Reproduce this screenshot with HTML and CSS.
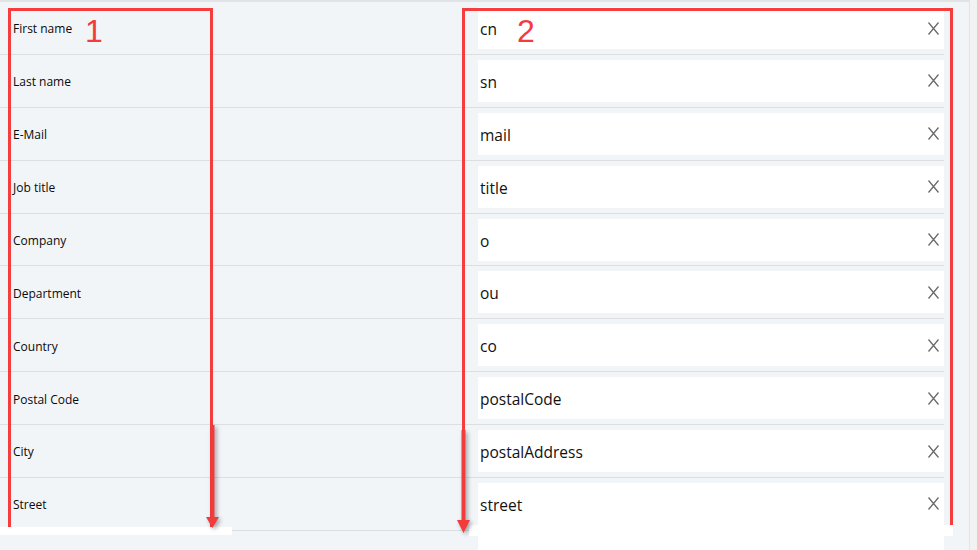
FILE: index.html
```html
<!DOCTYPE html>
<html>
<head>
  <title>User attributes</title>
  <link rel="stylesheet" href="styles.css">
</head>
<body>
  <div class="page">
    <div class="main">
      <div class="form">
        <div class="row">
          <label class="label">First name</label>
          <div class="field"><span class="value">cn</span><svg class="clear" viewBox="0 0 11 13"><path d="M0.5 0.5L10.5 12.5M10.5 0.5L0.5 12.5"/></svg></div>
        </div>
        <div class="row">
          <label class="label">Last name</label>
          <div class="field"><span class="value">sn</span><svg class="clear" viewBox="0 0 11 13"><path d="M0.5 0.5L10.5 12.5M10.5 0.5L0.5 12.5"/></svg></div>
        </div>
        <div class="row">
          <label class="label">E-Mail</label>
          <div class="field"><span class="value">mail</span><svg class="clear" viewBox="0 0 11 13"><path d="M0.5 0.5L10.5 12.5M10.5 0.5L0.5 12.5"/></svg></div>
        </div>
        <div class="row">
          <label class="label">Job title</label>
          <div class="field"><span class="value">title</span><svg class="clear" viewBox="0 0 11 13"><path d="M0.5 0.5L10.5 12.5M10.5 0.5L0.5 12.5"/></svg></div>
        </div>
        <div class="row">
          <label class="label">Company</label>
          <div class="field"><span class="value">o</span><svg class="clear" viewBox="0 0 11 13"><path d="M0.5 0.5L10.5 12.5M10.5 0.5L0.5 12.5"/></svg></div>
        </div>
        <div class="row">
          <label class="label">Department</label>
          <div class="field"><span class="value">ou</span><svg class="clear" viewBox="0 0 11 13"><path d="M0.5 0.5L10.5 12.5M10.5 0.5L0.5 12.5"/></svg></div>
        </div>
        <div class="row">
          <label class="label">Country</label>
          <div class="field"><span class="value">co</span><svg class="clear" viewBox="0 0 11 13"><path d="M0.5 0.5L10.5 12.5M10.5 0.5L0.5 12.5"/></svg></div>
        </div>
        <div class="row">
          <label class="label">Postal Code</label>
          <div class="field"><span class="value">postalCode</span><svg class="clear" viewBox="0 0 11 13"><path d="M0.5 0.5L10.5 12.5M10.5 0.5L0.5 12.5"/></svg></div>
        </div>
        <div class="row">
          <label class="label">City</label>
          <div class="field"><span class="value">postalAddress</span><svg class="clear" viewBox="0 0 11 13"><path d="M0.5 0.5L10.5 12.5M10.5 0.5L0.5 12.5"/></svg></div>
        </div>
        <div class="row">
          <label class="label">Street</label>
          <div class="field"><span class="value">street</span><svg class="clear" viewBox="0 0 11 13"><path d="M0.5 0.5L10.5 12.5M10.5 0.5L0.5 12.5"/></svg></div>
        </div>
        <div class="row">
          <label class="label"></label>
          <div class="field"></div>
        </div>
      </div>
    </div>
    <div class="side"></div>
  </div>

  <!-- annotations drawn over the screenshot -->
  <div class="mark mark-left"></div>
  <div class="mark mark-right"></div>
  <div class="num num-left">1</div>
  <div class="num num-right">2</div>
  <div class="cover cover-left"></div>
  <div class="cover cover-right"></div>
  <svg class="arrow arrow-left" width="20" height="110" viewBox="0 0 20 110">
    <path d="M4.5 0H8.5V92H13L6.5 103L0 92H4.5Z"/>
  </svg>
  <svg class="arrow arrow-right" width="20" height="110" viewBox="0 0 20 110">
    <path d="M4.5 0H8.5V90H13L6.5 103L0 90H4.5Z"/>
  </svg>
</body>
</html>
```

FILE: styles.css
```css
body {
  margin: 0;
  width: 977px;
  height: 550px;
  overflow: hidden;
  background-color: #f2f5f8;
  font-family: "Open Sans", "Noto Sans", sans-serif;
  color: #1b1b1b;
  position: relative;
}
.page {
  display: flex;
  height: 550px;
  overflow: hidden;
}
.main {
  width: 969px;
  border-top: 2px solid #e2e3e4;
}
.side {
  width: 7px;
  border-left: 1px solid #e4e4e4;
  background-color: #f3f2f2;
}
.form {
  width: 944px;
}
.row {
  display: grid;
  grid-template-columns: 478px 1fr;
  align-items: center;
  height: 52.875px;
  box-sizing: border-box;
  border-bottom: 1px solid #dcdfe2;
}
.label {
  padding-left: 13px;
  padding-top: 2px;
  font-size: 12px;
  color: #0a0a0a;
}
.field {
  align-self: start;
  margin-top: 5px;
  height: 42px;
  background-color: #fff;
  display: flex;
  align-items: center;
  justify-content: space-between;
  padding: 0 5px 0 2px;
}
.value {
  font-size: 15.5px;
  padding-top: 2px;
  color: #111;
}
.clear {
  width: 11px;
  height: 13px;
  fill: none;
  stroke: #6b6b6b;
  stroke-width: 1.3;
}
.mark {
  position: absolute;
  top: 8px;
  height: 519px;
  border: 3px solid #f53d3d;
  border-bottom: none;
  box-sizing: border-box;
}
.mark-left {
  left: 8px;
  width: 205px;
}
.mark-right {
  left: 462px;
  width: 491px;
}
.num {
  position: absolute;
  top: 13px;
  font-family: "Liberation Sans", Arial, sans-serif;
  font-size: 32px;
  color: #f43b3b;
}
.num-left {
  left: 85px;
}
.num-right {
  left: 517px;
}
.cover {
  position: absolute;
  background-color: #fff;
}
.cover-left {
  left: 0;
  top: 527px;
  width: 232px;
  height: 8px;
}
.cover-right {
  left: 469px;
  top: 525px;
  width: 484px;
  height: 11px;
}
.arrow {
  position: absolute;
  fill: #f03c3c;
  filter: drop-shadow(2px 2px 2px rgba(0, 0, 0, 0.35));
}
.arrow-left {
  left: 206px;
  top: 425px;
}
.arrow-right {
  left: 457px;
  top: 430px;
}
```
